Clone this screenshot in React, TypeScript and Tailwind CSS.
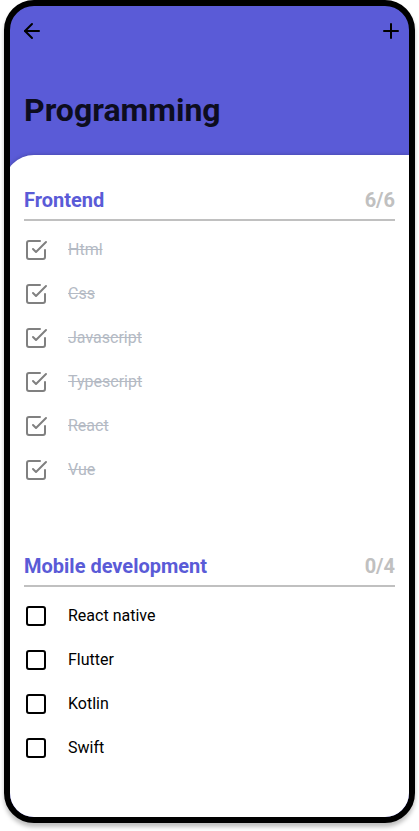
import { useState } from "react";

type Task = { name: string; done: boolean };
type Section = { title: string; tasks: Task[] };

const initialSections: Section[] = [
  {
    title: "Frontend",
    tasks: ["Html", "Css", "Javascript", "Typescript", "React", "Vue"].map((name) => ({ name, done: true })),
  },
  {
    title: "Mobile development",
    tasks: ["React native", "Flutter", "Kotlin", "Swift"].map((name) => ({ name, done: false })),
  },
];

function Icon({ paths, className = "" }: { paths: string[]; className?: string }) {
  return (
    <svg
      aria-hidden="true"
      viewBox="0 0 24 24"
      fill="none"
      stroke="currentColor"
      strokeWidth="2"
      strokeLinecap="round"
      strokeLinejoin="round"
      className={`size-6 ${className}`}
    >
      {paths.map((d) => (
        <path key={d} d={d} />
      ))}
    </svg>
  );
}

const arrowLeft = ["M19 12H5", "M12 19l-7-7 7-7"];
const plus = ["M12 5v14", "M5 12h14"];
const boxEmpty = ["M5 3h14a2 2 0 0 1 2 2v14a2 2 0 0 1-2 2H5a2 2 0 0 1-2-2V5a2 2 0 0 1 2-2z"];
const boxChecked = ["M9 11l3 3L22 4", "M21 12v7a2 2 0 0 1-2 2H5a2 2 0 0 1-2-2V5a2 2 0 0 1 2-2h11"];

function TaskRow({ task, onToggle }: { task: Task; onToggle: () => void }) {
  return (
    <li>
      <label className="flex h-11 cursor-pointer items-center gap-5">
        <span className="grid size-6 shrink-0">
          <input
            type="checkbox"
            checked={task.done}
            onChange={onToggle}
            className="col-start-1 row-start-1 size-6 cursor-pointer appearance-none"
          />
          <Icon
            paths={task.done ? boxChecked : boxEmpty}
            className={`pointer-events-none col-start-1 row-start-1 ${task.done ? "text-[#808080]" : "text-black"}`}
          />
        </span>
        <span className={task.done ? "text-[#b4bac4] line-through" : "text-black"}>{task.name}</span>
      </label>
    </li>
  );
}

export default function App() {
  const [sections, setSections] = useState(initialSections);

  const toggle = (title: string, name: string) =>
    setSections((current) =>
      current.map((s) =>
        s.title !== title
          ? s
          : { ...s, tasks: s.tasks.map((t) => (t.name === name ? { ...t, done: !t.done } : t)) },
      ),
    );

  return (
    <div className="bg-white px-1 pb-2 font-['Roboto',sans-serif] text-base">
      <div className="overflow-hidden rounded-[30px] border-6 border-black bg-[#5a5bd7] shadow-[0_4px_4px_rgba(0,0,0,0.25)]">
        <header className="pt-[13px] pb-[25px]">
          <nav className="flex justify-between pr-1.5 pl-2.5 text-black">
            <button type="button" aria-label="Back">
              <Icon paths={arrowLeft} />
            </button>
            <button type="button" aria-label="Add">
              <Icon paths={plus} />
            </button>
          </nav>
          <h1 className="mt-[47px] px-3.5 text-[32px] leading-10 font-bold text-[#0d0d1f]">Programming</h1>
        </header>
        <main className="-ml-1.5 flex flex-col gap-[62px] rounded-tl-[30px] bg-white pt-[33px] pr-3.5 pb-[47px] pl-5 shadow-[0_0_4px_rgba(0,0,0,0.25)]">
          {sections.map((section) => (
            <section key={section.title}>
              <div className="flex justify-between border-b-2 border-[#c0c0c0] pb-[7px] text-xl leading-6 font-bold">
                <h2 className="text-[#5a5bd7]">{section.title}</h2>
                <p className="text-[#c0c0c0]">
                  {`${section.tasks.filter((t) => t.done).length}/${section.tasks.length}`}
                </p>
              </div>
              <ul className="mt-[7px]">
                {section.tasks.map((task) => (
                  <TaskRow key={task.name} task={task} onToggle={() => toggle(section.title, task.name)} />
                ))}
              </ul>
            </section>
          ))}
        </main>
      </div>
    </div>
  );
}
